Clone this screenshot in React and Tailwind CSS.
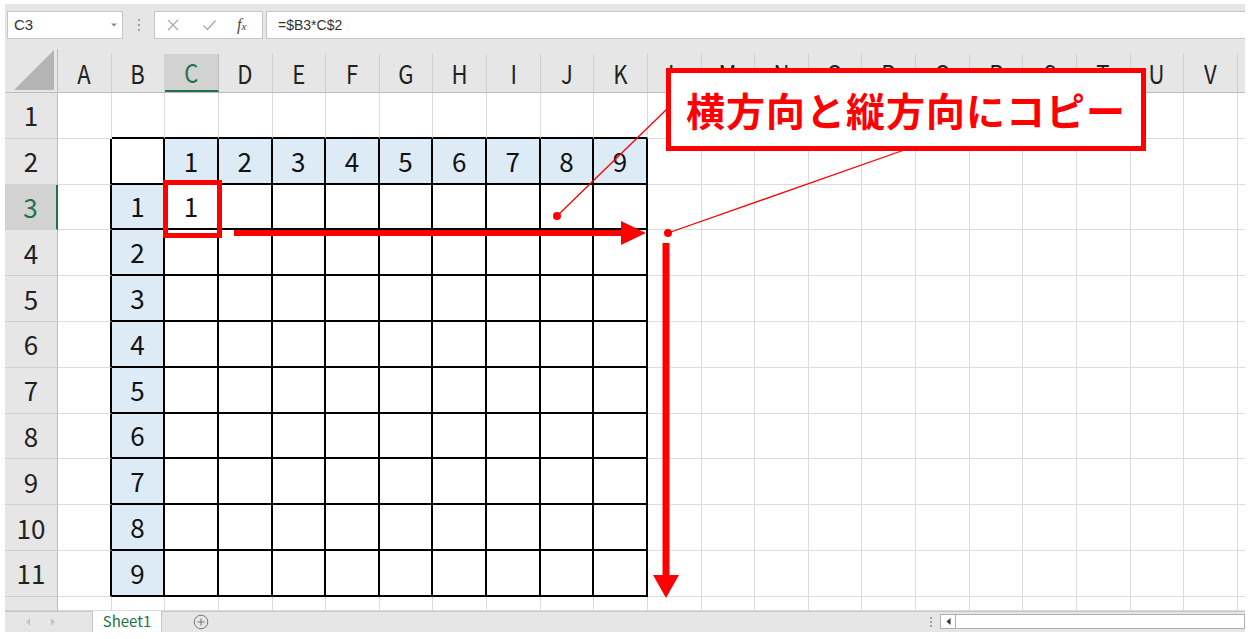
import React from "react";

const COLS = ["A","B","C","D","E","F","G","H","I","J","K","L","M","N","O","P","Q","R","S","T","U","V","W"];
const FONT = { fontFamily: '"Noto Sans CJK JP", "Noto Sans", sans-serif' };

function cellInfo(r, c) {
  // c: 0 = A, 1 = B ...
  const inTable = r >= 2 && r <= 11 && c >= 1 && c <= 10;
  let bg = "bg-white";
  let val = "";
  if (r === 2 && c >= 2 && c <= 10) { bg = "bg-[#ddebf7]"; val = String(c - 1); }
  if (c === 1 && r >= 3 && r <= 11) { bg = "bg-[#ddebf7]"; val = String(r - 2); }
  if (r === 3 && c === 2) val = "1";
  const rightBlack = inTable || (c === 0 && r >= 2 && r <= 11);
  const bottomBlack = inTable || (r === 1 && c >= 1 && c <= 10);
  return { bg, val, rightBlack, bottomBlack };
}

function Cell({ r, c }) {
  const { bg, val, rightBlack, bottomBlack } = cellInfo(r, c);
  const br = rightBlack ? "border-r-2 border-r-black" : "border-r border-r-[#dcdcdc]";
  const bb = bottomBlack ? "border-b-2 border-b-black" : "border-b border-b-[#dcdcdc]";
  return (
    <div className={`w-[53.64px] h-full shrink-0 ${bg} ${br} ${bb} flex items-center justify-center text-[26px] leading-none text-[#111]`}>
      {val}
    </div>
  );
}

function Row({ r }) {
  const sel = r === 3;
  const h = r === 12 ? "h-[14px] overflow-hidden items-start" : "h-[45.8px] items-center";
  return (
    <div className={`flex shrink-0 ${r === 12 ? "h-[14px] overflow-hidden" : "h-[45.8px]"}`}>
      <div
        className={`w-[53px] shrink-0 flex justify-center ${h} text-[26px] leading-none border-b border-b-[#d0d0d0] ${
          sel ? "bg-[#d2d2d2] text-[#217346] border-r-2 border-r-[#217346]" : "bg-[#e6e6e6] text-[#222] border-r border-r-[#bdbdbd]"
        } ${r === 12 ? "pt-[8px]" : ""}`}
      >
        {r}
      </div>
      {COLS.map((_, c) => (
        <Cell key={c} r={r} c={c} />
      ))}
    </div>
  );
}

export default function App() {
  return (
    <div className="relative w-[1250px] h-[639px] bg-white overflow-hidden" style={FONT}>
      <div className="absolute left-0 top-0 w-full h-full pt-[4px] pl-[5px]">
        <div className="w-[1240px] h-[628px] bg-[#e6e6e6] overflow-hidden flex flex-col">
          {/* formula bar */}
          <div className="h-[45px] shrink-0 flex items-start pt-[7px]">
            <div className="ml-[2px] w-[116px] h-[28px] bg-white border border-[#c6c6c6] flex items-center justify-between pl-[6px] pr-[4px]">
              <span className="text-[15px] text-[#333]" style={{ fontFamily: '"Liberation Sans", sans-serif' }}>C3</span>
              <svg width="8" height="6" viewBox="0 0 8 6"><path d="M1 1.5 L4 4.5 L7 1.5 Z" fill="#888" /></svg>
            </div>
            <div className="w-[31px] h-[28px] flex flex-col items-center justify-center gap-[3px]">
              <span className="w-[2px] h-[2px] bg-[#a0a0a0]" />
              <span className="w-[2px] h-[2px] bg-[#a0a0a0]" />
              <span className="w-[2px] h-[2px] bg-[#a0a0a0]" />
            </div>
            <div className="w-[109px] h-[28px] bg-white border border-[#c6c6c6] flex items-center">
              <svg className="ml-[11px]" width="14" height="14" viewBox="0 0 14 14">
                <path d="M2 2 L12 12 M12 2 L2 12" stroke="#a8a8a8" strokeWidth="1.3" />
              </svg>
              <svg className="ml-[22px]" width="15" height="14" viewBox="0 0 15 14">
                <path d="M1.5 7.5 L5.5 11.5 L13.5 2.5" stroke="#a8a8a8" strokeWidth="1.3" fill="none" />
              </svg>
              <span className="ml-[20px] italic text-[16px] text-[#444] leading-none" style={{ fontFamily: '"Liberation Serif", serif' }}>
                f<span className="text-[11px] align-baseline">x</span>
              </span>
            </div>
            <div className="ml-[3px] flex-1 h-[28px] bg-white border-y border-l border-[#c6c6c6] flex items-center pl-[11px]">
              <span className="text-[14px] text-[#333]" style={{ fontFamily: '"Liberation Sans", sans-serif' }}>=$B3*C$2</span>
            </div>
          </div>

          {/* column headers */}
          <div className="h-[44px] shrink-0 flex border-b border-b-[#bdbdbd]">
            <div className="w-[53px] shrink-0 relative border-r border-r-[#bdbdbd]">
              <svg className="absolute right-[3px] bottom-[2px]" width="40" height="40" viewBox="0 0 40 40">
                <path d="M40 0 L40 40 L0 40 Z" fill="#b4b4b4" />
              </svg>
            </div>
            {COLS.map((l, c) => (
              <div
                key={l}
                className={`w-[53.64px] shrink-0 flex items-center justify-center text-[26px] leading-none mt-[5px] ${
                  c === 2
                    ? "bg-[#d2d2d2] text-[#217346] border-b-2 border-b-[#217346] border-r border-r-[#bdbdbd]"
                    : "text-[#222] border-r border-r-[#cfcfcf]"
                }`}
              >
                <span className="inline-block scale-x-[0.85]">{l}</span>
              </div>
            ))}
          </div>

          {/* rows */}
          {[1, 2, 3, 4, 5, 6, 7, 8, 9, 10, 11, 12].map((r) => (
            <Row key={r} r={r} />
          ))}

          {/* sheet tab bar */}
          <div className="h-[21px] shrink-0 flex items-stretch border-t border-t-[#c6c6c6] bg-[#e6e6e6]">
            <div className="w-[87px] shrink-0 flex items-center">
              <svg className="ml-[20px]" width="6" height="8" viewBox="0 0 6 8"><path d="M5 0.5 L1 4 L5 7.5 Z" fill="#c0c0c0" /></svg>
              <svg className="ml-[19px]" width="6" height="8" viewBox="0 0 6 8"><path d="M1 0.5 L5 4 L1 7.5 Z" fill="#c0c0c0" /></svg>
            </div>
            <div className="w-[70px] shrink-0 -mt-px bg-white border-x border-[#c6c6c6] flex items-center justify-center text-[15px] text-[#217346]">
              Sheet1
            </div>
            <div className="ml-[31px] flex items-center">
              <svg width="16" height="16" viewBox="0 0 16 16">
                <circle cx="8" cy="8" r="6.8" fill="none" stroke="#777" strokeWidth="1" />
                <path d="M8 4.5 V11.5 M4.5 8 H11.5" stroke="#777" strokeWidth="1" />
              </svg>
            </div>
            <div className="flex-1" />
            <div className="w-[14px] flex flex-col items-center justify-center gap-[2px]">
              <span className="w-[2px] h-[2px] bg-[#a0a0a0]" />
              <span className="w-[2px] h-[2px] bg-[#a0a0a0]" />
              <span className="w-[2px] h-[2px] bg-[#a0a0a0]" />
            </div>
            <div className="ml-[2px] w-[305px] shrink-0 flex items-center">
              <div className="w-full h-[15px] bg-white border border-[#b0b0b0] flex">
                <div className="w-[15px] h-full border-r border-[#b0b0b0] flex items-center justify-center">
                  <svg width="5" height="7" viewBox="0 0 5 7"><path d="M4.5 0 L0.5 3.5 L4.5 7 Z" fill="#333" /></svg>
                </div>
              </div>
            </div>
          </div>
        </div>
      </div>

      {/* overlay drawings */}
      <svg className="absolute left-0 top-0 pointer-events-none" width="1250" height="639" viewBox="0 0 1250 639">
        <rect x="165.5" y="182.5" width="54" height="53" fill="none" stroke="#ff0000" strokeWidth="5" />
        <line x1="234" y1="233" x2="623" y2="233" stroke="#ff0000" strokeWidth="6" />
        <polygon points="621,221 646,233 621,245" fill="#ff0000" />
        <line x1="666" y1="243" x2="666" y2="577" stroke="#ff0000" strokeWidth="7" />
        <polygon points="653,575 679,575 666,598" fill="#ff0000" />
        <line x1="557" y1="216" x2="668" y2="108" stroke="#ff0000" strokeWidth="1.3" />
        <circle cx="557" cy="216" r="4" fill="#ff0000" />
        <line x1="668" y1="233" x2="907" y2="149" stroke="#ff0000" strokeWidth="1.3" />
        <circle cx="668" cy="233" r="4" fill="#ff0000" />
      </svg>

      <div className="absolute left-[666px] top-[68px] w-[480px] h-[83px] border-[5px] border-[#ff0000] bg-white flex items-center justify-center">
        <span className="text-[39px] font-bold text-[#ff0000] tracking-[1px] leading-none whitespace-nowrap">
          横方向と縦方向にコピー
        </span>
      </div>
    </div>
  );
}
